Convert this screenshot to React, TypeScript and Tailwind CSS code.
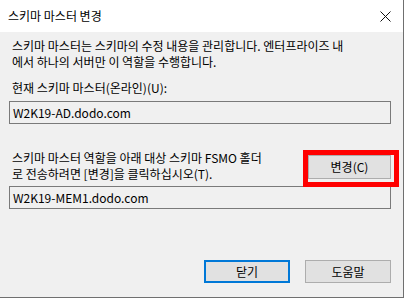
import React from "react";

const font = { fontFamily: '"Noto Sans CJK KR", "Noto Sans", sans-serif' };

export default function App() {
  return (
    <div className="w-[408px] h-[299px] bg-white" style={font}>
      <div className="w-[404px] h-[298px] border-r border-b border-[#6f6f6f] flex flex-col text-[12px] text-black">
        <div className="h-[32px] bg-white flex items-center justify-between pl-[8px] pr-[12px] shrink-0">
          <span className="leading-none">스키마 마스터 변경</span>
          <svg width="11" height="11" viewBox="0 0 11 11" className="shrink-0">
            <path d="M0.5 0.5 L10.5 10.5 M10.5 0.5 L0.5 10.5" stroke="#111" strokeWidth="1" fill="none" />
          </svg>
        </div>
        <div className="flex-1 bg-[#f0f0f0] pl-[9px] pr-[12px] pt-[6px] flex flex-col relative">
          <p className="pl-[3px] leading-[16px]">
            스키마 마스터는 스키마의 수정 내용을 관리합니다. 엔터프라이즈 내
            <br />
            에서 하나의 서버만 이 역할을 수행합니다.
          </p>
          <p className="pl-[3px] mt-[10px] leading-[16px]">현재 스키마 마스터(온라인)(U):</p>
          <div className="mt-[5px] h-[23px] w-[382px] border border-[#7a7a7a] bg-[#f0f0f0] flex items-center pl-[3px]">
            W2K19-AD.dodo.com
          </div>
          <div className="mt-[26px] flex items-start w-[382px]">
            <p className="pl-[3px] leading-[16px] w-[296px]">
              스키마 마스터 역할을 아래 대상 스키마 FSMO 홀더
              <br />
              로 전송하려면 [변경]을 클릭하십시오(T).
            </p>
            <button className="ml-auto mt-[5px] w-[83px] h-[24px] bg-[#e1e1e1] border border-[#adadad] flex items-center justify-center">
              변경(C)
            </button>
          </div>
          <div className="mt-[4px] h-[23px] w-[382px] border border-[#7a7a7a] bg-[#f0f0f0] flex items-center pl-[3px]">
            W2K19-MEM1.dodo.com
          </div>
          <div className="mt-[51px] flex gap-[15px] justify-end w-[382px]">
            <button className="w-[86px] h-[23px] bg-[#e1e1e1] border-2 border-[#0078d7] flex items-center justify-center">
              닫기
            </button>
            <button className="w-[86px] h-[23px] bg-[#e1e1e1] border border-[#adadad] flex items-center justify-center">
              도움말
            </button>
          </div>
          <div className="absolute left-[303px] top-[118px] w-[96px] h-[37px] border-[5px] border-[#ff0000]" />
        </div>
      </div>
    </div>
  );
}
